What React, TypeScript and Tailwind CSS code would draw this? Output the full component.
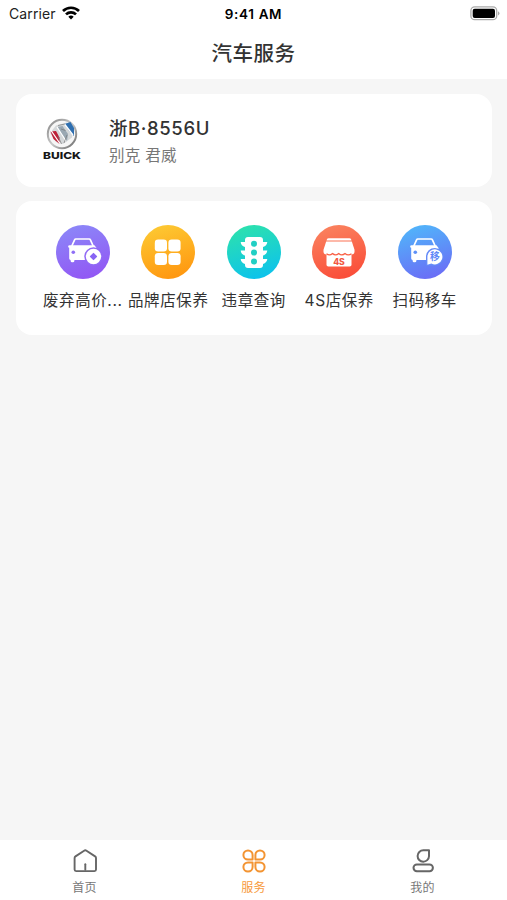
import type { ReactNode } from "react";

const textFont = "font-['Inter','Noto_Sans_CJK_SC',sans-serif]";

function StatusBar() {
  return (
    <div className="relative flex h-[27px] items-center justify-between pl-[9px] pr-[7px] text-black">
      <div className="flex items-center gap-[6px]">
        <span className="text-[14px] leading-5 tracking-[0.1px] text-[#222]">Carrier</span>
        <svg width="18" height="14" viewBox="0 0 18 14" fill="none" stroke="#000" strokeWidth="2.7" className="-mt-px">
          <path d="M1 5a11.5 11.5 0 0 1 16 0" />
          <path d="M4 8.400a7.200 7.200 0 0 1 10 0" />
          <path d="M6.300 10.700a3.900 3.900 0 0 1 5.400 0L9 13.500Z" fill="#000" stroke="none" />
        </svg>
      </div>
      <span className="absolute left-1/2 -translate-x-1/2 whitespace-nowrap text-[13.5px] font-semibold leading-5 tracking-[0.65px]">
        9:41 AM
      </span>
      <svg width="30" height="15" viewBox="0 0 30 15" fill="none">
        <rect x=".9" y=".9" width="25.8" height="12.8" rx="3.8" stroke="#aaa" strokeWidth="1.3" />
        <rect x="2.7" y="2.7" width="22.3" height="9.2" rx="2" fill="#000" />
        <path d="M28 5.2q3 2.2 0 4.4Z" fill="#aaa" />
      </svg>
    </div>
  );
}

function BuickLogo() {
  return (
    <svg width="40" height="44" viewBox="0 0 40 44">
      <defs>
        <linearGradient id="ring" x1="0" y1="0" x2="1" y2="1">
          <stop stopColor="#858585" />
          <stop offset=".5" stopColor="#c9c9c9" />
          <stop offset="1" stopColor="#666" />
        </linearGradient>
      </defs>
      <circle cx="19" cy="16" r="14.2" fill="#f6f6f6" stroke="url(#ring)" strokeWidth="2" />
      <path d="M13 7.500 24 4.500l7 6-2 9-9 6.500-7-2-6-9Z" fill="#d5d8da" />
      <path d="m21.500 6 6-2 3.500 6v8l-5-5Z" fill="#2f6fb0" />
      <path d="m14.500 9 5-1 5.500 8-1 7.500-5-6Z" fill="#9aa8b3" />
      <path d="m7.500 13.500 5.500-.5 3.500 6.500V26l-6-5Z" fill="#bd1f36" />
      <path d="m8 12.500 9 13M14 9l9 14M21.500 6 30 17" stroke="#fff" strokeWidth="1.300" />
      <path d="m15 7.500 7-1.500M18 11l4.500 1.500M24 17l-3 8M15 18l3.500 8" stroke="#777" strokeWidth=".7" />
      <text x="0" y="41.200" fontFamily="Inter" fontSize="9.500" fontWeight="800" fill="#161616" textLength="38" lengthAdjust="spacingAndGlyphs">
        BUICK
      </text>
    </svg>
  );
}

function Disc({ id, from, to, children }: { id: string; from: string; to: string; children: ReactNode }) {
  return (
    <svg width="54" height="54" viewBox="0 0 54 54">
      <defs>
        <linearGradient id={id} x1=".35" y1="0" x2=".65" y2="1">
          <stop stopColor={from} />
          <stop offset="1" stopColor={to} />
        </linearGradient>
      </defs>
      <circle cx="27" cy="27" r="27" fill={`url(#${id})`} />
      {children}
    </svg>
  );
}

function Car({ hole }: { hole: string }) {
  return (
    <g>
      <path d="m15.800 21 2.900-6.300q.3-.7 1.100-.7h13.400q.8 0 1.100.7l2.900 6.300" fill="none" stroke="#fff" strokeWidth="1.7" strokeLinejoin="round" />
      <path
        d="M15 20.300h23.500l2 2.700v12H18.400v.7q0 1.600-1.600 1.600h-.6q-1.600 0-1.600-1.600V35q-1.400 0-1.400-1.400V22.700l-1-.4q-.4-2 1.500-2Z"
        fill="#fff"
      />
      <circle cx="17.300" cy="27.300" r="1.800" fill={hole} />
    </g>
  );
}

function RecycleIcon() {
  return (
    <Disc id="purple" from="#8c86f8" to="#9256f4">
      <Car hole="#8f6ff6" />
      <circle cx="37.5" cy="31.5" r="9.2" fill="#9069f5" />
      <circle cx="37.5" cy="31.5" r="7.7" fill="#fff" />
      <path d="M37.500 28.700 40.300 31.500 37.500 34.300 34.700 31.500Z" fill="#8865f4" stroke="#8865f4" strokeWidth="1.600" strokeLinejoin="round" />
    </Disc>
  );
}

function BrandIcon() {
  return (
    <Disc id="amber" from="#fdc832" to="#ff960f">
      <g fill="#fff">
        <rect x="13.8" y="14.6" width="12.2" height="12" rx="3.3" />
        <rect x="27.4" y="14.6" width="12.2" height="12" rx="3.3" />
        <rect x="13.8" y="28" width="12.2" height="12" rx="3.3" />
        <rect x="27.4" y="28" width="12.2" height="12" rx="3.3" />
      </g>
    </Disc>
  );
}

function TrafficIcon() {
  return (
    <Disc id="teal" from="#2ce1ae" to="#0cc2ed">
      <path
        d="M21 12h12a3 3 0 0 1 3 3v2h4.300q-.4 4-4.300 5v3.600h4.300q-.4 4-4.300 5v3.300h4.300q-.4 3.700-4.300 5v1a3 3 0 0 1-3 3H21a3 3 0 0 1-3-3v-1q-4-1.300-4.300-5H18v-3.300q-4-1-4.300-5H18V22q-4-1-4.300-5H18v-2a3 3 0 0 1 3-3Z"
        fill="#fff"
      />
      <g fill="#22cfc4">
        <circle cx="27" cy="18.700" r="3" />
        <circle cx="27" cy="27.600" r="3" />
        <circle cx="27" cy="36.500" r="3" />
      </g>
    </Disc>
  );
}

function StoreIcon() {
  return (
    <Disc id="coral" from="#fa815e" to="#fa4c38">
      <path d="M16.500 13.200h21q1.700 0 2 2.300H14.500q.3-2.300 2-2.300Z" fill="#fff" />
      <path d="M14.200 16.600h25.600l2.700 8.200v1.800q0 2.900-3 2.900h-25q-3 0-3-2.900v-1.800Z" fill="#fff" />
      <path d="M14.500 27h25v12.800a1.800 1.800 0 0 1-1.800 1.800H16.300a1.800 1.800 0 0 1-1.800-1.800Z" fill="#fff" />
      <path d="M14.500 28.700q3 2.500 6-.2 3 2.700 6.200 0 3.200 2.700 6.300 0 3.200 2.700 6.500.2" fill="none" stroke="#f96045" strokeWidth="1.300" />
      <text x="27" y="39.500" fontFamily="Inter" fontSize="8.700" fontWeight="800" textAnchor="middle" fill="#f2583f">
        4S
      </text>
    </Disc>
  );
}

function MoveCarIcon() {
  return (
    <Disc id="blue" from="#51b4fa" to="#6b6cf6">
      <Car hole="#5e91f8" />
      <path d="M28 40.500V31.500a8.800 8.800 0 1 1 8.800 9Z" fill="#648bf8" />
      <path d="M29.400 39.700V31.700a7.500 7.500 0 1 1 4 6.800Z" fill="#fff" />
      <text x="36.800" y="35.300" fontFamily="Noto Sans CJK SC" fontSize="9.800" fontWeight="700" textAnchor="middle" fill="#6088f8">
        移
      </text>
    </Disc>
  );
}

const services = [
  { label: "废弃高价...", icon: <RecycleIcon /> },
  { label: "品牌店保养", icon: <BrandIcon /> },
  { label: "违章查询", icon: <TrafficIcon /> },
  { label: "4S店保养", icon: <StoreIcon /> },
  { label: "扫码移车", icon: <MoveCarIcon /> },
];

function HomeIcon() {
  return (
    <svg width="28" height="28" viewBox="0 0 28 28" fill="none" stroke="#666" strokeWidth="1.9" strokeLinecap="round" strokeLinejoin="round">
      <path d="M3.600 11q0-1 .9-1.600l8.600-5.700q1.200-.8 2.400 0l8.600 5.700q.9.600.9 1.600v11.600q0 1.500-1.500 1.500H5.100q-1.500 0-1.500-1.500Z" />
      <path d="M14.300 17.300v5.500" />
    </svg>
  );
}

function ServiceIcon() {
  return (
    <svg width="28" height="28" viewBox="0 0 28 28" fill="none" stroke="#f39432" strokeWidth="2" strokeLinejoin="round">
      <path d="M12.600 12.600H8a4.600 4.600 0 1 1 4.600-4.600Z" />
      <path d="M15.400 12.600H20a4.600 4.600 0 1 0-4.600-4.600Z" />
      <path d="M12.600 15.400H8a4.600 4.600 0 1 0 4.600 4.600Z" />
      <path d="M15.400 15.400H20a4.600 4.600 0 1 1-4.600 4.600Z" />
    </svg>
  );
}

function ProfileIcon() {
  return (
    <svg width="28" height="28" viewBox="0 0 28 28" fill="none" stroke="#666" strokeWidth="2" strokeLinejoin="round">
      <path d="M20 3.300V9.200a5.700 5.700 0 1 1-5.700-5.900Z" />
      <rect x="4.500" y="17.500" width="19.400" height="6.700" rx="3.350" />
    </svg>
  );
}

const tabs = [
  { label: "首页", icon: <HomeIcon />, color: "text-[#777]" },
  { label: "服务", icon: <ServiceIcon />, color: "text-[#f79a3b]" },
  { label: "我的", icon: <ProfileIcon />, color: "text-[#777]" },
];

export default function App() {
  return (
    <div className={`flex h-[900px] w-[507px] flex-col overflow-hidden bg-[#f6f6f6] text-[#333] ${textFont}`}>
      <header className="h-[79px] shrink-0 bg-white">
        <StatusBar />
        <h1 className="text-center text-[20.5px] font-medium leading-[54px] tracking-[0.5px]">汽车服务</h1>
      </header>

      <main className="flex flex-1 flex-col gap-[14px] pl-4 pr-[15px] pt-[15px]">
        <section className="flex h-[93px] rounded-2xl bg-white pl-[27px] pt-6">
          <BuickLogo />
          <div className="pl-[26px]">
            <p className="-mt-1 text-[18.5px] font-medium leading-7 tracking-[0.6px]">浙B·8556U</p>
            <p className="pt-px text-[15.5px] leading-[26px] tracking-[0.3px] text-[#777]">别克 君威</p>
          </div>
        </section>

        <section className="flex h-[134px] rounded-2xl bg-white pl-6 pt-[24px]">
          {services.map((s) => (
            <div key={s.label} className="flex w-[85.5px] flex-col items-center gap-[9px]">
              {s.icon}
              <span className="whitespace-nowrap text-[15.5px] leading-[25px] tracking-[0.6px]">{s.label}</span>
            </div>
          ))}
        </section>
      </main>

      <nav className="grid h-[60px] shrink-0 grid-cols-3 bg-white pt-[7px]">
        {tabs.map((t) => (
          <div key={t.label} className={`flex flex-col items-center gap-[4px] ${t.color}`}>
            {t.icon}
            <span className="text-[12px] leading-[18px] tracking-[0.3px]">{t.label}</span>
          </div>
        ))}
      </nav>
    </div>
  );
}
